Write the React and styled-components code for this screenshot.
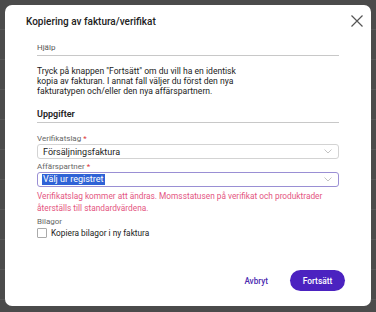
import React from 'react';
import styled, { createGlobalStyle } from 'styled-components';

const GlobalStyle = createGlobalStyle`
    html, body {
        margin: 0;
        padding: 0;
        height: 100%;
    }
    body {
        background-color: #4b4b4b;
        background-image: repeating-linear-gradient(
            to bottom,
            transparent 0px,
            transparent 29px,
            #575757 29px,
            #575757 30px
        );
        font-family: Roboto, "Noto Sans", sans-serif;
        color: #222;
    }
`;

const Backdrop = styled.div`
    padding: 5px;
    height: 312px;
    box-sizing: border-box;
`;

const Dialog = styled.div`
    width: 366px;
    height: 301px;
    box-sizing: border-box;
    background: #fff;
    border-radius: 7px;
    display: flex;
    flex-direction: column;
    padding: 0 0 0 21px;
`;

const Header = styled.div`
    display: flex;
    align-items: center;
    justify-content: space-between;
    height: 32px;
    padding-right: 8px;
`;

const Title = styled.h2`
    margin: 0;
    font-size: 10px;
    font-weight: 500;
    color: #222;
`;

const CloseButton = styled.button`
    border: none;
    background: none;
    padding: 0;
    width: 12px;
    height: 12px;
    display: flex;
    cursor: pointer;
`;

const Body = styled.div`
    padding: 6px 32px 0 11px;
    display: flex;
    flex-direction: column;
    flex: 1;
`;

const SectionTitle = styled.div`
    font-size: ${p => (p.$strong ? '9px' : '8px')};
    line-height: ${p => (p.$strong ? '11px' : '10px')};
    font-weight: ${p => (p.$strong ? 600 : 400)};
    color: ${p => (p.$strong ? '#222' : '#555')};
    padding-bottom: 2px;
    border-bottom: 1px solid #c8c8c8;
    margin-bottom: 10px;
`;

const Paragraph = styled.p`
    margin: 0 0 13px;
    font-size: 8.6px;
    line-height: 10px;
    color: #222;
`;

const Label = styled.div`
    font-size: 8px;
    color: #666;
    line-height: ${p => (p.$short ? '10px' : '11px')};
`;

const Required = styled.span`
    color: #e03a3a;
    margin-left: 2px;
`;

const SelectBox = styled.div`
    height: 15px;
    box-sizing: border-box;
    border: 1px solid ${p => (p.$focused ? '#9a8fd4' : '#d3d3d3')};
    border-radius: 3px;
    display: flex;
    align-items: center;
    justify-content: space-between;
    padding: 0 6px 0 ${p => (p.$focused ? '4px' : '5px')};
    font-size: 9px;
    color: #222;
    margin-bottom: ${p => (p.$focused ? '3px' : '2px')};
`;

const Selected = styled.span`
    background: #2f62d6;
    color: #fff;
    padding: 0 1px;
    line-height: 11px;
`;

const ErrorText = styled.div`
    font-size: 8.3px;
    line-height: 12px;
    color: #e4557f;
    margin-bottom: 3px;
`;

const CheckRow = styled.label`
    display: flex;
    align-items: center;
    gap: 4px;
    height: 10px;
    margin-top: 1px;
    font-size: 8.3px;
    color: #222;
`;

const CheckBox = styled.span`
    width: 8px;
    height: 8px;
    border: 1px solid #aaa;
    border-radius: 1px;
    display: inline-block;
`;

const Footer = styled.div`
    display: flex;
    justify-content: flex-end;
    align-items: center;
    gap: 22px;
    padding: 0 26px 15px 0;
`;

const TextButton = styled.button`
    border: none;
    background: none;
    font-family: inherit;
    font-size: 8.2px;
    font-weight: 500;
    color: #4b2cb0;
    padding: 0;
`;

const PrimaryButton = styled.button`
    border: none;
    background: #4b22c0;
    color: #fff;
    font-family: inherit;
    font-size: 8.4px;
    font-weight: 500;
    width: 55px;
    height: 21px;
    border-radius: 11px;
`;

const Chevron = () => (
    <svg width="8" height="5" viewBox="0 0 8 5">
        <path d="M0.5 0.5 L4 4 L7.5 0.5" fill="none" stroke="#b5b5b5" strokeWidth="0.8" />
    </svg>
);

const App = () => {
    return <>
        <GlobalStyle />
        <Backdrop>
            <Dialog>
                <Header>
                    <Title>Kopiering av faktura/verifikat</Title>
                    <CloseButton>
                        <svg width="12" height="12" viewBox="0 0 12 12">
                            <path d="M0.5 0.5 L11.5 11.5 M11.5 0.5 L0.5 11.5" stroke="#555" strokeWidth="1.2" />
                        </svg>
                    </CloseButton>
                </Header>
                <Body>
                    <SectionTitle>Hjälp</SectionTitle>
                    <Paragraph>
                        Tryck på knappen "Fortsätt" om du vill ha en identisk<br />
                        kopia av fakturan. I annat fall väljer du först den nya<br />
                        fakturatypen och/eller den nya affärspartnern.
                    </Paragraph>
                    <SectionTitle $strong>Uppgifter</SectionTitle>
                    <Label>Verifikatslag<Required>*</Required></Label>
                    <SelectBox>
                        <span>Försäljningsfaktura</span>
                        <Chevron />
                    </SelectBox>
                    <Label>Affärspartner<Required>*</Required></Label>
                    <SelectBox $focused>
                        <Selected>Välj ur registret</Selected>
                        <Chevron />
                    </SelectBox>
                    <ErrorText>
                        Verifikatslag kommer att ändras. Momsstatusen på verifikat och produktrader<br />
                        återställs till standardvärdena.
                    </ErrorText>
                    <Label $short>Bilagor</Label>
                    <CheckRow>
                        <CheckBox />
                        Kopiera bilagor i ny faktura
                    </CheckRow>
                </Body>
                <Footer>
                    <TextButton>Avbryt</TextButton>
                    <PrimaryButton>Fortsätt</PrimaryButton>
                </Footer>
            </Dialog>
        </Backdrop>
    </>;
};

export default App;
